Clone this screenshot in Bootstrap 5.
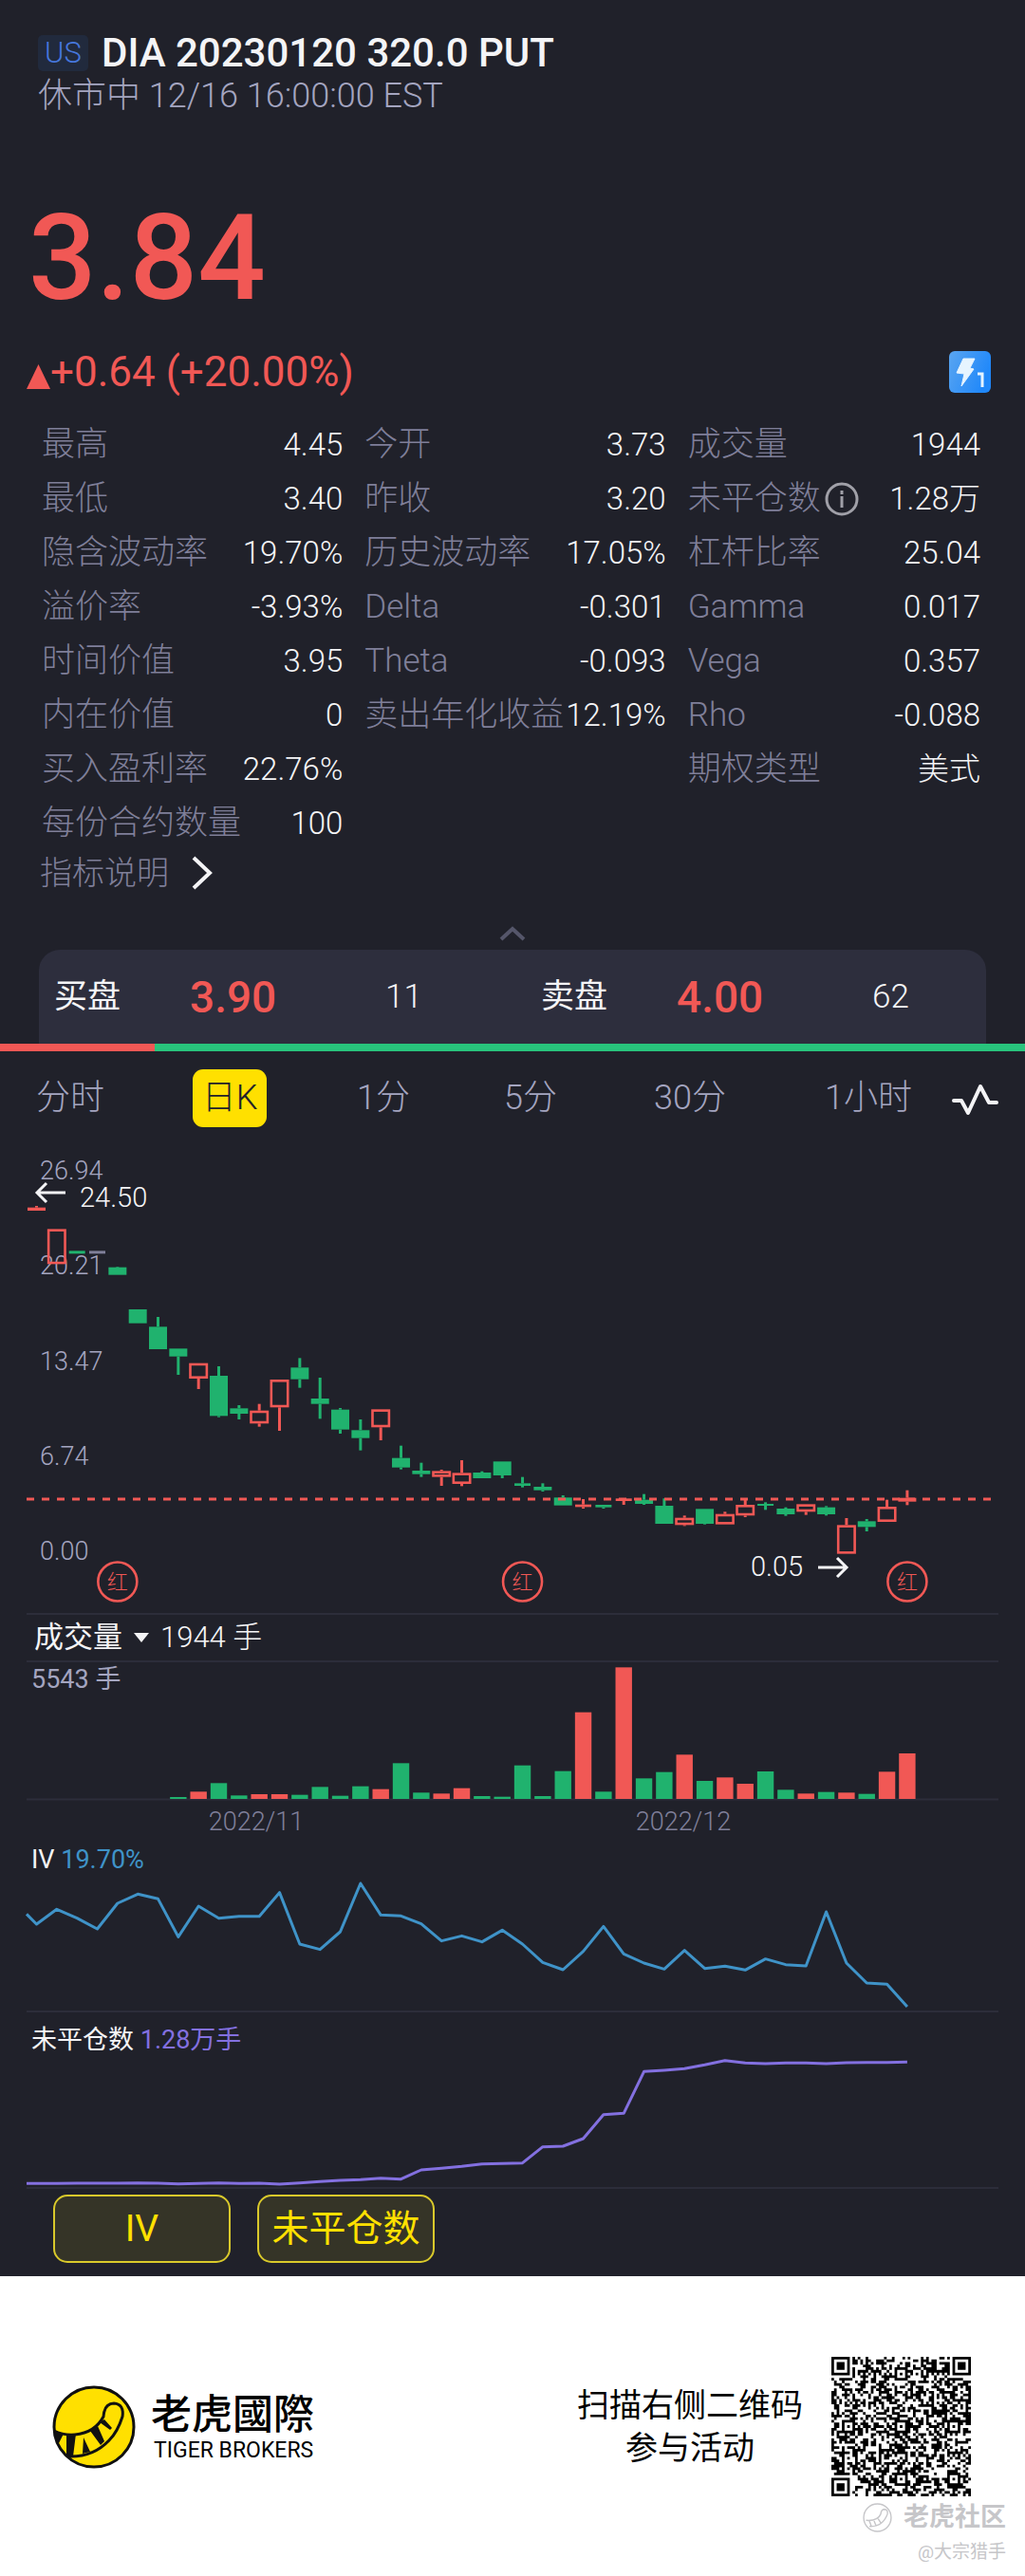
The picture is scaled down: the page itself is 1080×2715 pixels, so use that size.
<!DOCTYPE html>
<html lang="zh-CN">
<head>
<meta charset="utf-8">
<meta name="viewport" content="width=device-width, initial-scale=1">
<title>DIA 20230120 320.0 PUT</title>
<link href="https://cdn.jsdelivr.net/npm/bootstrap@5.3.0/dist/css/bootstrap.min.css" rel="stylesheet">
<style>
:root{--ink:#20212a;--up:#f15855;--down:#20b26e;--dim:#7f7f99;--soft:#a4a5c0;--line:#2c2d3a;--sun:#ffe000}
body{background:var(--ink);color:#f4f4f6;font-family:Roboto,"Noto Sans CJK SC",sans-serif;font-weight:400;font-size:34px;line-height:40px}
svg{display:block}
.thin{font-weight:300}
.up{color:var(--up)}
.soft{color:var(--soft)}
.quote-head{padding:32px 40px 0}
.market-tag{background:#212a3d;color:#4677dc;font-size:31px;line-height:38px;width:53px;border-radius:5px;text-align:center;font-weight:300}
.contract{font-size:42px;line-height:48px;font-weight:500;margin:0}
.session{font-size:36px;line-height:42px;font-weight:300}
.last-price{font-size:126px;line-height:156px;font-weight:500;padding:72px 30px 0}
.change-row{padding:17px 36px 0 28px}
.change-text{font-size:44px;line-height:50px}
.facts{padding:23px 47px 0 44px;display:grid;grid-template-columns:317fr 317fr 308fr;column-gap:23px;margin:0;line-height:57px;font-weight:300}
.facts dt{color:var(--dim);font-weight:300;font-size:35px}
.facts dd{margin:0;font-size:33px}
.facts>div{display:flex;justify-content:space-between;white-space:nowrap;height:57px}
.explain{padding:4px 42px 0;font-size:34px;color:var(--dim);font-weight:300}
.explain a{color:inherit}
.caret{margin-top:36px}
.book{margin:9px 41px 0;padding:0 0 0 16px;background:#2d2e3d;border-radius:22px 22px 0 0;height:99px;display:grid;grid-template-columns:143fr 206fr 164fr 143fr 206fr 120fr;align-items:center;font-size:35px}
.book .offer{font-size:46px;font-weight:500}
.ratio{height:8px;background:#28c47c}
.ratio>div{background:var(--up)}
.periods{padding:19px 28px 0 38px;display:grid;grid-template-columns:165fr 173fr 155fr 158fr 180fr 134fr 49fr;height:92px;align-items:start}
.periods button{background:none;border:0;padding:0;color:var(--soft);font-size:36px;line-height:61px;font-weight:300;justify-self:start;white-space:nowrap}
.periods .now{background:var(--sun);color:#22222a;border-radius:11px;width:78px}
.vol-head{margin:0 28px;padding:0 8px;height:52px;border-top:2px solid var(--line);border-bottom:2px solid var(--line);font-size:31px;line-height:48px}
.vol-head button{background:none;border:0;padding:0;color:inherit}
.pane{position:relative}
.pane-label{position:absolute;left:33px;top:0;font-size:27px;line-height:36px;font-weight:400}
.pane-label.iv-label{top:3px}
.pane-label.oi-label{top:11px}
.chips{padding:6px 56px 14px;gap:28px}
.chips button{width:187px;height:72px;border:2px solid #d9c92b;border-radius:15px;background:#353427;color:var(--sun);font-size:39px;line-height:60px;padding:0;font-weight:400}
.brand{background:#fff;color:#000;height:316px;position:relative}
.brand-inner{padding:85px 57px 0 55px}
.brand-name{font-size:43px;line-height:50px;font-weight:500;font-family:Roboto,"Noto Sans CJK TC",sans-serif}
.brand-en{font-size:23px;line-height:26px;padding-left:3px}
.scan{font-size:34px;line-height:45px;text-align:center;margin-right:30px}
.stamp{position:absolute;right:20px;top:234px;color:#c6c6c9;text-align:right}
.stamp-name{font-size:27px;line-height:40px;font-weight:700;gap:12px}
.stamp-user{font-size:19px;line-height:34px}
.blue{color:#3f93c8}
.violet{color:#8370e0}
</style>
<script src="https://cdn.jsdelivr.net/npm/bootstrap@5.3.0/dist/js/bootstrap.bundle.min.js"></script>
</head>
<body>
<header class="quote-head">
  <div class="d-flex align-items-center" style="gap:14px"><span class="market-tag">US</span><h1 class="contract">DIA 20230120 320.0 PUT</h1></div>
  <div class="session soft">休市中 12/16 16:00:00 EST</div>
</header>
<main>
<div class="last-price up">3.84</div>
<div class="change-row d-flex justify-content-between align-items-center">
  <div class="d-flex align-items-center up change-text">
    <svg class="mt-2" width="25" height="27" viewBox="0 0 25 27" aria-hidden="true"><path d="M12.500 1L25 27H0z" fill="#f15855"/></svg><span>+0.64 (+20.00%)</span>
  </div>
  <svg width="44" height="44" viewBox="0 0 44 44" aria-label="Level 1">
    <defs><linearGradient id="lv" x1="0" y1="0" x2="1" y2="0.4"><stop offset="0" stop-color="#5aa5f0"/><stop offset="1" stop-color="#2088fa"/></linearGradient></defs>
    <rect width="44" height="44" rx="6" fill="url(#lv)"/><path d="M15 8h12l-5 10 4 1-13 18 3-13-8-1z" fill="#e6f4ff" stroke="#e6f4ff" stroke-linejoin="round"/><path d="M30 24h5v14" fill="none" stroke="#e6f4ff" stroke-width="3"/>
  </svg>
</div>
<dl class="facts">
  <div><dt>最高</dt><dd>4.45</dd></div><div><dt>今开</dt><dd>3.73</dd></div><div><dt>成交量</dt><dd>1944</dd></div>
  <div><dt>最低</dt><dd>3.40</dd></div><div><dt>昨收</dt><dd>3.20</dd></div>
  <div><dt class="d-flex align-items-center">未平仓数<svg class="ms-1" width="36" height="36" viewBox="0 0 36 36" fill="none" stroke="#a0a0a8" stroke-width="3" aria-hidden="true"><circle cx="18" cy="18" r="16"/><path d="M18 15v12M18 9v4"/></svg></dt><dd>1.28万</dd></div>
  <div><dt>隐含波动率</dt><dd>19.70%</dd></div><div><dt>历史波动率</dt><dd>17.05%</dd></div><div><dt>杠杆比率</dt><dd>25.04</dd></div>
  <div><dt>溢价率</dt><dd>-3.93%</dd></div><div><dt>Delta</dt><dd>-0.301</dd></div><div><dt>Gamma</dt><dd>0.017</dd></div>
  <div><dt>时间价值</dt><dd>3.95</dd></div><div><dt>Theta</dt><dd>-0.093</dd></div><div><dt>Vega</dt><dd>0.357</dd></div>
  <div><dt>内在价值</dt><dd>0</dd></div><div><dt>卖出年化收益</dt><dd>12.19%</dd></div><div><dt>Rho</dt><dd>-0.088</dd></div>
  <div><dt>买入盈利率</dt><dd>22.76%</dd></div><div></div><div><dt>期权类型</dt><dd>美式</dd></div>
  <div><dt>每份合约数量</dt><dd>100</dd></div>
</dl>
<div class="explain"><a href="#" class="text-decoration-none d-flex align-items-center">指标说明<svg class="ms-4" width="22" height="36" viewBox="0 0 22 36" fill="none" stroke="#f4f4f6" stroke-width="4" aria-hidden="true"><path d="M2 2l17 16L2 34"/></svg></a></div>
<svg class="mx-auto caret" width="28" height="16" viewBox="0 0 28 16" fill="none" stroke="#55566a" stroke-width="4" aria-hidden="true"><path d="M2 14L14 3l12 11"/></svg>
<section class="book">
  <span>买盘</span><span class="offer up">3.90</span><span class="thin">11</span>
  <span>卖盘</span><span class="offer up">4.00</span><span class="thin">62</span>
</section>
<div class="ratio d-flex"><div style="width:15.1%"></div></div>
<nav class="periods" aria-label="周期">
  <button type="button">分时</button><button type="button" class="now">日K</button><button type="button">1分</button><button type="button">5分</button><button type="button">30分</button><button type="button">1小时</button>
  <button type="button" aria-label="指标"><svg width="49" height="61" viewBox="0 0 49 61" fill="none" stroke="#f4f4f6" stroke-width="4" stroke-linejoin="round" stroke-linecap="round"><path d="M2 33h8l7 13L30 18l9 17h8"/></svg></button>
</nav>
<svg id="price" class="w-100" viewBox="0 0 1080 500" role="img" aria-label="日K"></svg>
<div class="vol-head d-flex align-items-center"><button type="button" class="d-flex align-items-center">成交量<svg class="mx-2" width="24" height="12" viewBox="0 0 24 12" aria-hidden="true"><path d="M4 1h16l-8 10z" fill="#f4f4f6"/></svg></button><span class="thin">1944 手</span></div>
<div class="pane"><div class="pane-label soft thin">5543 手</div><svg id="volume" class="w-100" viewBox="0 0 1080 187" role="img" aria-label="成交量"></svg></div>
<div class="pane"><div class="pane-label iv-label">IV <span class="blue">19.70%</span></div><svg id="iv" class="w-100" viewBox="0 0 1080 182" role="img" aria-label="IV"></svg></div>
<div class="pane"><div class="pane-label oi-label">未平仓数 <span class="violet">1.28万手</span></div><svg id="oi" class="w-100" viewBox="0 0 1080 186" role="img" aria-label="未平仓数"></svg></div>
<div class="chips d-flex"><button type="button">IV</button><button type="button">未平仓数</button></div>
</main>
<footer class="brand">
  <div class="brand-inner d-flex justify-content-between">
    <div class="d-flex align-items-center">
      <svg width="88" height="88" viewBox="0 0 88 88" aria-hidden="true">
        <circle cx="44" cy="44" r="42" fill="#ffe000" stroke="#111" stroke-width="3"/>
        <g id="tail"><path d="M2 48Q12 53 24 52Q45 50 54 33Q55 19 65 19Q76 20 74 33Q69 49 60 58Q43 76 17 75" fill="none" stroke="#111" stroke-width="3"/>
        <path d="M2 48l10 3-6 12zM15 51h10l-3 24-7-1zM33 55l7 15-8 2zM40 48l8-5 7 16-4 4zM50 39l5-3 8 9-2 2z" fill="#111"/></g>
      </svg>
      <div class="ms-3"><div class="brand-name">老虎國際</div><div class="brand-en">TIGER BROKERS</div></div>
    </div>
    <div class="d-flex align-items-center"><div class="scan">扫描右侧二维码<br>参与活动</div><svg id="qr" width="147" height="147" viewBox="0 0 53 53" role="img" aria-label="二维码"></svg></div>
  </div>
  <div class="stamp"><div class="stamp-name d-flex align-items-center justify-content-end"><svg width="31" height="31" viewBox="0 0 88 88" fill="none" stroke="#c6c6c9" stroke-width="4" aria-hidden="true"><circle cx="44" cy="44" r="41"/><path d="M10 52Q45 55 54 33Q55 19 65 19Q76 20 74 33Q60 72 20 70M20 54l6 16M34 54l6 14M46 47l8 12"/></svg><span>老虎社区</span></div><div class="stamp-user">@大宗猎手</div></div>
</footer>
<script>
const UP='#f15855',DOWN='#20b26e',FLAT='#7f7f99',X0=38.5,STEP=21.335;
const x=i=>X0+i*STEP;
// [type, body top, body bottom, high, low] in thirds of a unit
const candles=[['s',218,228,213,228],['r',286,397],['g',355,364],['f',355,364],['g',407,431,405,431],['g',540,584],['g',595,666,564,666],['g',664,689,664,747],['r',710,759,710,792],['g',750,877,720,881],['g',853,870,843,888],['r',860,901,839,911],['r',762,850,762,924],['g',724,761,694,788],['g',822,839,756,886],['g',857,920,852,933],['g',922,947,888,986],['r',856,913,856,954],['g',1010,1040,971,1046],['g',1050,1061,1025,1070],['r',1051,1070,1047,1098],['r',1057,1092,1017,1099],['g',1056,1074,1052,1074],['g',1021,1065,1021,1074],['g',1090,1098,1070,1103],['g',1101,1112,1090,1116],['g',1135,1160,1128,1160],['s',1157,1165,1140,1170],['g',1158,1166,1158,1170],['s',1138,1146,1138,1158],['g',1142,1155,1124,1158],['g',1161,1218,1138,1218],['r',1199,1222,1192,1225],['g',1171,1218,1171,1220],['r',1187,1220,1180,1220],['r',1158,1192,1138,1197],['g',1155,1161,1150,1174],['g',1170,1188,1166,1193],['r',1156,1180,1156,1190],['g',1166,1188,1162,1192],['r',1222,1313,1200,1313],['g',1210,1228,1203,1242],['r',1164,1212,1142,1212],['s',1136,1148,1112,1159]];
let s='<g font-size="27" font-weight="300" fill="#a4a5c0">';
[['26.94',43],['20.21',143],['13.47',244],['6.74',344],['0.00',444]].forEach(([t,y])=>s+=`<text x="42" y="${y}">${t}</text>`);
s+='</g>';
candles.forEach(([k,a,b,h=a,l=b],i)=>{
  const c=k==='g'?DOWN:k==='f'?FLAT:UP,cx=x(i);
  a/=3;b/=3;h/=3;l/=3;
  const w=b-a<3.1?17:19;
  if(h<a)s+=`<path d="M${cx} ${h}V${a}" stroke="${c}" stroke-width="3"/>`;
  if(l>b)s+=`<path d="M${cx} ${b}V${l}" stroke="${c}" stroke-width="3"/>`;
  s+=k==='r'?`<rect x="${cx-8.7}" y="${a+1.3}" width="17.4" height="${b-a-2.6}" fill="none" stroke="${c}" stroke-width="2.6"/>`:`<rect x="${cx-w/2}" y="${a}" width="${w}" height="${b-a}" fill="${c}"/>`;
});
s+=`<path d="M28 380H1044" stroke="${UP}" stroke-width="3" stroke-dasharray="8 8"/>`;
s+='<g fill="none" stroke="#f4f4f6" stroke-width="3"><path d="M69 57H39M49 47L39 57l10 10M862 452h30M882 442l10 10-10 10"/></g>';
s+='<g font-size="29" font-weight="300" fill="#f4f4f6"><text x="84" y="72">24.50</text><text x="791" y="461">0.05</text></g>';
[4,24,43].forEach(i=>s+=`<circle cx="${x(i)}" cy="467" r="20.500" fill="none" stroke="${UP}" stroke-width="2.600"/><text x="${x(i)}" y="475" font-size="22" font-weight="300" text-anchor="middle" fill="${UP}">红</text>`);
document.getElementById('price').innerHTML=s;

const vol='g611 r594 g567 g606 r602 r602 g604 g579 g607 g577 r586 g504 g597 r600 r583 g608 g610 g511 g608 g529 r343 g594 r201 g552 g532 r477 g560 r549 r569 g530 g588 r600 g595 r597 g601 r531 r473'.split(' ');
s='<path d="M28 144.500H1052" stroke="#2c2d3a" stroke-width="2"/>';
vol.forEach((v,i)=>{const h=(617-v.slice(1))/3;s+=`<rect x="${x(i+7)-8.7}" y="${144-h}" width="17.4" height="${h}" fill="${v[0]==='r'?UP:DOWN}"/>`});
s+='<g font-size="27" font-weight="300" fill="#7f7f99" text-anchor="middle"><text x="270" y="177">2022/11</text><text x="720" y="177">2022/12</text></g>';
document.getElementById('volume').innerHTML=s;

const line=(id,pts,first,off,color,base)=>{
  const d='M28 '+(first/3-off)+pts.map((p,i)=>'L'+x(i)+' '+(p/3-off)).join('');
  document.getElementById(id).innerHTML=`<path d="${d}" fill="none" stroke="${color}" stroke-width="3" stroke-linejoin="round"/><path d="M28 ${base}H1052" stroke="#2c2d3a" stroke-width="2"/>`;
};
line('iv',[294,247,275,309,228,199,214,334,237,275,269,269,194,357,374,318,165,265,268,293,347,331,350,313,357,415,438,380,301,388,417,436,377,434,427,439,404,422,426,255,417,480,484,555],262,9,'#3f93c8',181);
line('oi',[1114,1114,1113,1113,1113,1112,1113,1115,1114,1112,1114,1113,1116,1112,1108,1104,1102,1097,1100,1071,1066,1060,1052,1051,1049,998,996,972,896,892,760,756,751,739,725,733,735,733,733,735,732,731,731,730],1114,191,'#8370e0',185);

// 53-module code: finders, alignment marks, timing lines, data field
const N=53;let seed=20230120,q='';
const rnd=()=>(seed=(seed*1103515245+12345)%2147483648)/2147483648;
const ring=(r,c,cr,cc,rad)=>{const m=Math.max(Math.abs(r-cr),Math.abs(c-cc));return m<=rad?m:-1};
for(let r=0;r<N;r++)for(let c=0;c<N;c++){
  let on=rnd()<.5,m;
  if(r===6||c===6)on=(r+c)%2===0;
  for(const a of[6,26,46])for(const b of[6,26,46])if((a===26||b===26||(a===46&&b===46))&&(m=ring(r,c,a,b,2))>=0)on=m!==1;
  for(const[a,b]of[[3,3],[3,49],[49,3]])if((m=ring(r,c,a,b,4))>=0)on=m!==2&&m!==4;
  if(on)q+=`M${c} ${r}h1v1h-1z`;
}
document.getElementById('qr').innerHTML=`<path d="${q}" fill="#000"/>`;
</script>
</body>
</html>
